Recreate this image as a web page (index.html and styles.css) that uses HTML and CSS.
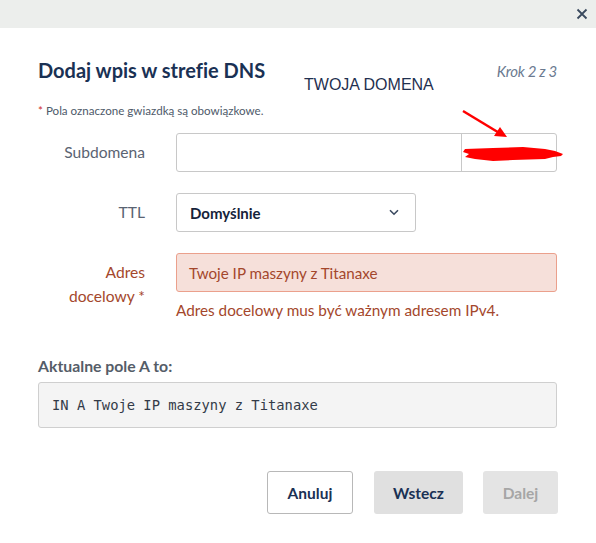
FILE: index.html
```html
<!DOCTYPE html>
<html lang="pl">
<head>
<meta charset="utf-8">
<title>Dodaj wpis w strefie DNS</title>
<link rel="stylesheet" href="styles.css">
</head>
<body>
<div class="topbar">
  <button class="close" aria-label="Zamknij">
    <svg width="12" height="12" viewBox="0 0 12 12"><path d="M1.5 1.5 L10.5 10.5 M10.5 1.5 L1.5 10.5" stroke="#3a4a5e" stroke-width="1.8" fill="none"/></svg>
  </button>
</div>
<div class="dialog">
  <div class="header">
    <h1 class="title">Dodaj wpis w strefie DNS</h1>
    <span class="step">Krok 2 z 3</span>
  </div>
  <p class="note"><span class="req">*</span> Pola oznaczone gwiazdką są obowiązkowe.</p>
  <div class="form">
    <label class="label">Subdomena</label>
    <div class="input-group">
      <div class="input"></div>
      <div class="addon"></div>
    </div>
    <label class="label">TTL</label>
    <div class="select">
      <span>Domyślnie</span>
      <svg width="10" height="7" viewBox="0 0 10 7"><path d="M1 1.2 L5 5.2 L9 1.2" stroke="#3b4a60" stroke-width="1.6" fill="none"/></svg>
    </div>
    <label class="label error-label">Adres<br>docelowy *</label>
    <div class="field">
      <div class="input error-input">Twoje IP maszyny z Titanaxe</div>
      <div class="error-text">Adres docelowy mus być ważnym adresem IPv4.</div>
    </div>
  </div>
  <div class="current-title">Aktualne pole A to:</div>
  <div class="record">IN A Twoje IP maszyny z Titanaxe</div>
  <div class="actions">
    <button class="btn btn-outline">Anuluj</button>
    <button class="btn btn-grey">Wstecz</button>
    <button class="btn btn-disabled">Dalej</button>
  </div>
</div>
<div class="annotation">TWOJA DOMENA</div>
<svg class="arrow" width="60" height="40" viewBox="0 0 60 40">
  <path d="M2 2 L40 25" stroke="#f00" stroke-width="2.5" fill="none"/>
  <path d="M46 28 L33 27 L39 18 Z" fill="#f00"/>
</svg>
<svg class="scribble" width="104" height="20" viewBox="0 0 104 20">
  <path d="M2 4 L30 3 L60 2 L82 4 L92 6 L100 9 L98 11 L90 12 L82 14 L50 15 L30 16 L12 14 L2 12 L6 9 L0 7 Z" fill="#f00"/>
</svg>
</body>
</html>
```
FILE: styles.css
```css
* { box-sizing: border-box; }
body {
  margin: 0;
  background: #fff;
  font-family: "Lato", "Noto Sans", sans-serif;
  font-variant-ligatures: none;
  color: #1d2f4e;
  position: relative;
  width: 596px;
  height: 543px;
  overflow: hidden;
}
.topbar {
  height: 28px;
  background: #eceeec;
  display: flex;
  justify-content: flex-end;
  align-items: center;
  padding-right: 8px;
}
.close {
  border: 0;
  background: transparent;
  padding: 0;
  width: 12px;
  height: 12px;
  display: flex;
}
.dialog {
  width: 596px;
  padding: 30px 39px 0 38px;
}
.header {
  display: flex;
  justify-content: space-between;
  align-items: flex-start;
}
.title {
  margin: 0;
  font-size: 20px;
  line-height: 24px;
  font-weight: 700;
  color: #1a3154;
}
.step {
  white-space: nowrap;
  font-family: "Lato", sans-serif;
  font-style: italic;
  font-weight: 400;
  font-size: 15px;
  letter-spacing: -0.3px;
  color: #6b7a90;
  margin-top: 4px;
}
.note {
  margin: 22px 0 0;
  font-size: 11.6px;
  line-height: 14px;
  color: #4e5a6a;
}
.req { color: #d0302a; }
.form {
  margin-top: 15px;
  display: grid;
  grid-template-columns: 107px 1fr;
  column-gap: 31px;
  row-gap: 21px;
}
.label {
  text-align: right;
  font-size: 15.6px;
  line-height: 24px;
  padding-top: 7px;
  color: #5a6372;
}
.input-group {
  display: flex;
  height: 39px;
  border: 1px solid #c8c8c8;
  border-radius: 3px;
}
.input-group .input { flex: 1; }
.addon {
  width: 95px;
  border-left: 1px solid #c8c8c8;
}
.select {
  width: 240px;
  height: 39px;
  border: 1px solid #c8c8c8;
  border-radius: 3px;
  display: flex;
  justify-content: space-between;
  align-items: center;
  padding: 0 16px 0 13px;
  font-size: 15px;
  font-weight: 700;
  color: #16233a;
}
.error-label { color: #a4472c; }
.input.error-input {
  height: 39px;
  border: 1px solid #eba08c;
  border-radius: 3px;
  background: #f6e0da;
  color: #a4472c;
  font-size: 15.2px;
  display: flex;
  align-items: center;
  padding: 0 12px;
}
.error-text {
  margin-top: 8px;
  font-size: 15.3px;
  line-height: 20px;
  color: #a4472c;
}
.current-title {
  margin-top: 36px;
  font-size: 15.8px;
  font-weight: 700;
  color: #555d68;
}
.record {
  margin-top: 7px;
  height: 46px;
  border: 1px solid #cfcfcf;
  border-radius: 3px;
  background: #f4f4f4;
  font-family: "DejaVu Sans Mono", monospace;
  font-size: 13.8px;
  color: #333b48;
  display: flex;
  align-items: center;
  padding: 0 13px;
}
.actions {
  margin-top: 43px;
  margin-right: -1px;
  display: flex;
  justify-content: flex-end;
  gap: 20px;
}
.btn {
  height: 43px;
  border-radius: 3px;
  font-family: "Lato", sans-serif;
  font-size: 15.5px;
  font-weight: 700;
  border: 1px solid transparent;
}
.btn-outline {
  width: 86px;
  margin-right: 1px;
  background: #fff;
  border-color: #b8b8b8;
  color: #1a3154;
}
.btn-grey {
  width: 89px;
  background: #e0e0e0;
  color: #1a3154;
}
.btn-disabled {
  width: 75px;
  background: #e4e4e4;
  color: #a6a6a6;
}
.annotation {
  position: absolute;
  left: 304px;
  top: 76px;
  font-family: "Liberation Sans", Arial, sans-serif;
  font-size: 16px;
  color: #1f3050;
}
.arrow {
  position: absolute;
  left: 461px;
  top: 109px;
}
.scribble {
  position: absolute;
  left: 463px;
  top: 145px;
}
```
